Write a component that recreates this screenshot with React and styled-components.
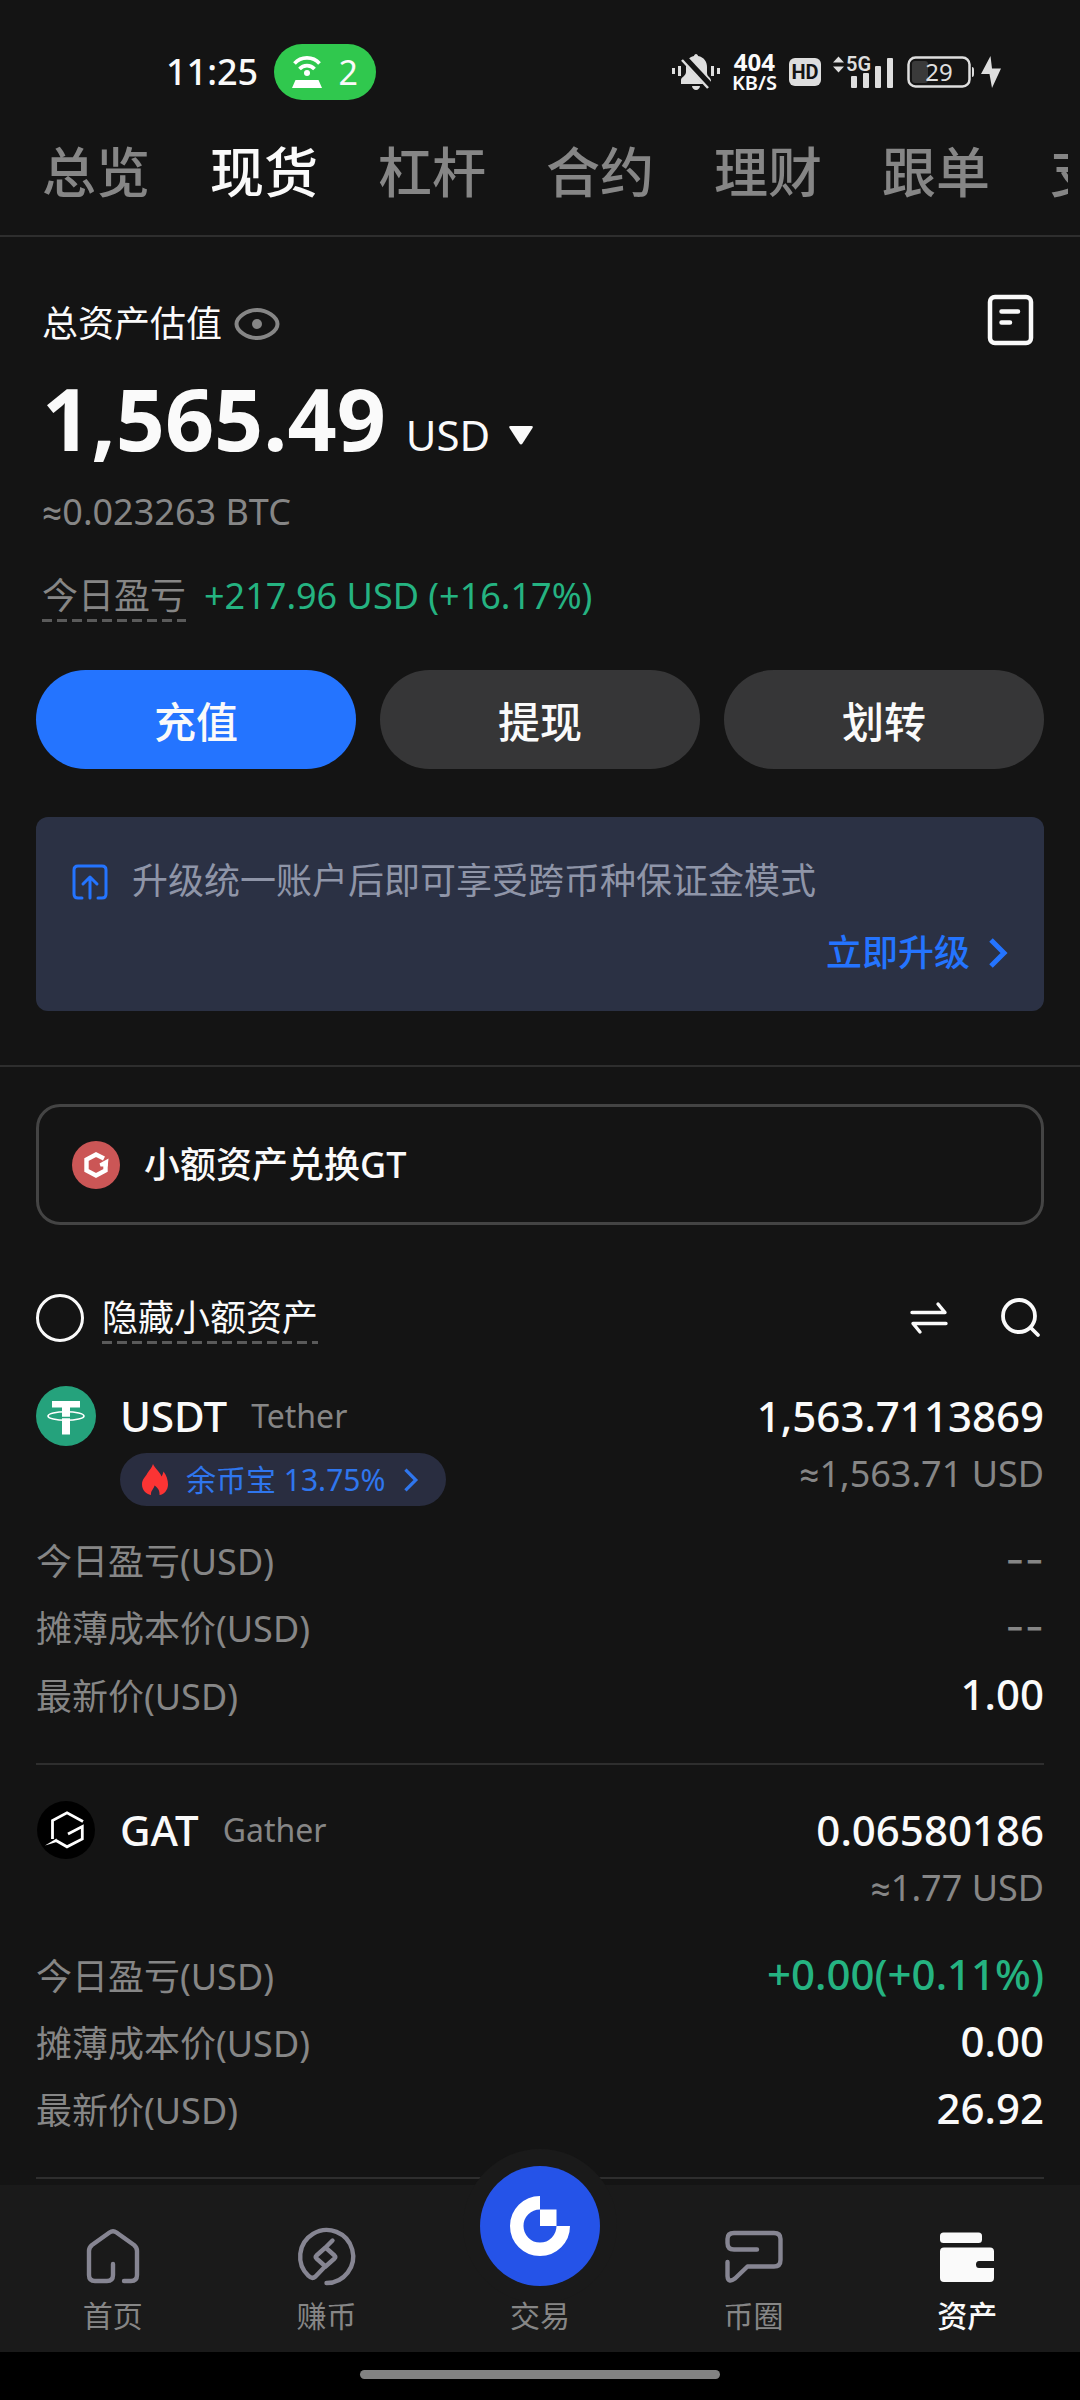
import React from "react";
import styled, { createGlobalStyle } from "styled-components";

const color = {
  page: "#141414",
  nav: "#1a1a1a",
  line: "#2e2e2e",
  text: "#fafafa",
  muted: "#868686",
  navIcon: "#868592",
  blue: "#2474ff",
  green: "#25b381",
};

const GlobalStyle = createGlobalStyle`
  *, *::before, *::after { box-sizing: border-box; }
  body {
    margin: 0;
    background: ${color.page};
    color: ${color.text};
    font-family: "Noto Sans", "Roboto", "Noto Sans CJK SC", sans-serif;
    font-size: 36px;
    line-height: 48px;
  }
  button, select, input { font: inherit; color: inherit; margin: 0; }
  button { border: 0; padding: 0; background: none; cursor: pointer; }
  a { color: inherit; text-decoration: none; }
  svg { display: block; flex: none; overflow: visible; }
  h1, h2, p, dl, dd, ul { margin: 0; padding: 0; font-weight: inherit; font-size: inherit; }
`;

const Screen = styled.div`
  display: flex;
  flex-direction: column;
  min-height: 100vh;
`;

/* ---------- status bar ---------- */

const StatusBar = styled.header`
  display: flex;
  justify-content: space-between;
  align-items: center;
  height: 56px;
  margin-top: 44px;
  padding: 0 79px 0 166px;
`;

const StatusGroup = styled.div`
  display: flex;
  align-items: center;
  gap: ${(p) => p.$gap}px;
`;

const Clock = styled.time`
  font-weight: 500;
`;

const Hotspot = styled.div`
  display: flex;
  align-items: center;
  justify-content: center;
  gap: 16px;
  width: 102px;
  height: 56px;
  border-radius: 28px;
  background: #30c84e;
  font-size: 34px;
`;

const NetSpeed = styled.div`
  display: flex;
  flex-direction: column;
  align-items: center;
  font-size: 24px;
  line-height: 22px;
  font-weight: 700;
`;

const NetUnit = styled.span`
  font-size: 20px;
  line-height: 20px;
  font-weight: 600;
`;

const HdBadge = styled.span`
  width: 32px;
  height: 28px;
  border-radius: 6px;
  background: #dedede;
  color: ${color.page};
  font: 700 20px/28px "Roboto", sans-serif;
  text-align: center;
`;

/* ---------- account tabs ---------- */

const Tabs = styled.nav`
  border-bottom: 2px solid ${color.line};
  padding: 36px 12px 27px 42px;
`;

const TabList = styled.div`
  display: flex;
  gap: 60px;
  overflow: hidden;
`;

const Tab = styled.a`
  flex: none;
  font-size: 54px;
  line-height: 72px;
  font-weight: 500;
  color: ${(p) => (p.$active ? color.text : color.muted)};
`;

/* ---------- balance summary ---------- */

const Summary = styled.section`
  padding: 57px 36px 54px;
  border-bottom: 2px solid ${color.line};
`;

const SummaryText = styled.div`
  display: flex;
  flex-direction: column;
  padding: 0 8px 0 6px;
`;

const TitleRow = styled.div`
  display: flex;
  align-items: center;
  justify-content: space-between;
  height: 52px;
`;

const Title = styled.div`
  display: flex;
  align-items: center;
  gap: 12px;
  padding-top: 8px;
`;

const BalanceRow = styled.div`
  display: flex;
  align-items: baseline;
  gap: 20px;
  margin-top: 22px;
  line-height: 100px;
`;

const Balance = styled.strong`
  font-size: 86px;
  font-weight: 700;
`;

const CurrencyPicker = styled.label`
  display: flex;
  align-items: center;
  gap: 18px;
  line-height: 48px;
`;

const CurrencySelect = styled.select`
  appearance: none;
  border: 0;
  padding: 0;
  background: none;
  font-size: 42px;
`;

const BtcValue = styled.p`
  margin-top: 20px;
  color: ${color.muted};
`;

const ProfitRow = styled.div`
  display: flex;
  align-items: center;
  gap: 18px;
  margin-top: 34px;
`;

const Dashed = styled.span`
  padding: 2px 0;
  color: ${(p) => (p.$muted ? color.muted : color.text)};
  background: repeating-linear-gradient(90deg, #5a5a5a 0 10px, transparent 10px 15px) left bottom / 100% 3px no-repeat;
`;

const Gain = styled.span`
  color: ${color.green};
`;

const Actions = styled.div`
  display: grid;
  grid-template-columns: repeat(3, 1fr);
  gap: 24px;
  margin-top: 48px;
`;

const ActionButton = styled.button`
  height: 99px;
  padding-top: 4px;
  border-radius: 50px;
  background: ${(p) => (p.$primary ? color.blue : "#363637")};
  font-size: 42px;
  font-weight: 500;
`;

const Banner = styled.div`
  display: flex;
  flex-direction: column;
  gap: 24px;
  margin-top: 48px;
  padding: 40px 36px 34px;
  border-radius: 12px;
  background: #2b3144;
`;

const BannerMessage = styled.p`
  display: flex;
  align-items: center;
  gap: 24px;
  color: #8f95a8;
`;

const BannerLink = styled.a`
  display: flex;
  align-items: center;
  align-self: flex-end;
  gap: 18px;
  color: ${color.blue};
  font-weight: 500;
`;

/* ---------- asset list ---------- */

const Assets = styled.section`
  flex: 1;
  padding: 37px 36px 0;
`;

const ConvertButton = styled.button`
  display: flex;
  align-items: center;
  gap: 24px;
  width: 100%;
  height: 121px;
  padding: 0 33px;
  border: 3px solid #444444;
  border-radius: 24px;
  font-weight: 500;
`;

const FilterRow = styled.div`
  display: flex;
  align-items: center;
  justify-content: space-between;
  margin-top: 67px;
  padding-right: 2px;
`;

const HideSmall = styled.label`
  display: flex;
  align-items: center;
  gap: 18px;
`;

const RoundCheckbox = styled.input`
  appearance: none;
  width: 48px;
  height: 48px;
  border: 3px solid ${color.text};
  border-radius: 50%;
  &:checked { background: ${color.blue}; }
`;

const FilterTools = styled.div`
  display: flex;
  gap: 52px;
`;

const AssetList = styled.ul`
  list-style: none;
  margin-top: 7px;
`;

const Asset = styled.li`
  padding: 35px 0 43px;
  border-bottom: 2px solid ${color.line};
`;

const AssetHead = styled.div`
  display: flex;
  gap: 24px;
  min-height: 120px;
`;

const AssetInfo = styled.div`
  flex: 1;
  display: flex;
  flex-direction: column;
  align-items: flex-start;
  gap: 7px;
`;

const AssetName = styled.h2`
  display: flex;
  align-items: center;
  gap: 24px;
  line-height: 60px;
`;

const Symbol = styled.span`
  font-size: 42px;
  font-weight: 500;
`;

const FullName = styled.span`
  color: ${color.muted};
  font-size: 32px;
`;

const EarnTag = styled.a`
  display: flex;
  align-items: center;
  gap: 18px;
  height: 53px;
  padding: 0 27px 0 22px;
  border-radius: 27px;
  background: #292d40;
  color: #2f76ee;
  font-size: 30px;
`;

const AssetAmount = styled.div`
  display: flex;
  flex-direction: column;
  align-items: flex-end;
  gap: 4px;
`;

const Amount = styled.span`
  font-size: 42px;
  line-height: 60px;
  font-weight: 500;
`;

const Approx = styled.span`
  color: ${color.muted};
`;

const Details = styled.dl`
  display: flex;
  flex-direction: column;
  gap: 17px;
  margin-top: 30px;
`;

const Detail = styled.div`
  display: flex;
  align-items: baseline;
  justify-content: space-between;
  height: 50px;
`;

const DetailLabel = styled.dt`
  color: ${color.muted};
`;

const DetailValue = styled.dd`
  font-size: 42px;
  font-weight: 500;
  color: ${(p) => (p.$gain ? color.green : color.text)};
`;

const EmptyValue = styled.dd`
  color: ${color.muted};
  font-family: "Inter", sans-serif;
  font-size: 42px;
`;

/* ---------- bottom navigation ---------- */

const BottomBar = styled.footer`
  position: sticky;
  bottom: 0;
  background: #000;
`;

const NavItems = styled.nav`
  display: flex;
  align-items: flex-end;
  padding: 0 6px 16px;
  height: 167px;
  background: ${color.nav};
`;

const NavItem = styled.a`
  flex: 1;
  display: flex;
  flex-direction: column;
  align-items: center;
  gap: 10px;
  font-size: 30px;
  line-height: 40px;
  color: ${(p) => (p.$active ? color.text : color.muted)};
  font-weight: ${(p) => (p.$active ? 500 : 400)};
`;

const TradeDisc = styled.span`
  display: flex;
  align-items: center;
  justify-content: center;
  width: 120px;
  height: 120px;
  border-radius: 50%;
  background: #2553e8;
  box-shadow: 0 0 0 17px ${color.nav};
`;

const NavLabel = styled.span`
  position: relative;
`;

const GestureArea = styled.div`
  display: flex;
  justify-content: center;
  height: 48px;
  padding-top: 18px;
`;

const GesturePill = styled.div`
  width: 33.3%;
  height: 9px;
  border-radius: 5px;
  background: #828282;
`;

/* ---------- icons ---------- */

const HotspotIcon = () => (
  <svg width="30" height="34" viewBox="0 0 30 34" fill="none" stroke="#fff" strokeWidth="3.6">
    <path d="M2.5 8.5C9 1 21 1 27.500 8.500" />
    <path d="M7.500 14C11.500 9.500 18.500 9.500 22.500 14" />
    <circle cx="15" cy="18" r="3" fill="#fff" stroke="none" />
    <path d="M3.500 25H26.500L30 33H0Z" fill="#fff" stroke="none" />
  </svg>
);

const MutedBell = () => (
  <svg width="48" height="36" viewBox="0 0 48 36" fill="#dedede">
    <path d="M0 14h3v6H0zM6 12h3v10H6zM39 12h3v10h-3zM45 14h3v6h-3z" />
    <path d="M24 0C25 0 26 1 26 2C32 3 35 8 35 13V19C35 23 39 23 39 27V30H9V26C9 23 14 22 14 18V12C14 7 17 3 22 2C22 1 23 0 24 0Z" />
    <path d="M20 32H28C28 34 26 36 24 36S20 34 20 32Z" />
    <path d="M12 4L39 33" stroke={color.page} strokeWidth="7" />
    <path d="M10 6L36 34" stroke="#dedede" strokeWidth="2.500" />
  </svg>
);

const Signal = () => (
  <svg width="62" height="36" viewBox="0 0 62 36" fill="#dedede">
    <path d="M0 8.500L5.500 2.500L11 8.500ZM0 12.500H11L5.500 18.500Z" />
    <rect x="18" y="22" width="6" height="12" rx="1" />
    <rect x="30" y="19" width="6" height="15" rx="1" />
    <rect x="42" y="12" width="6" height="22" rx="1" />
    <rect x="54" y="4" width="6" height="30" rx="1" />
    <text x="13" y="17" fontFamily="Roboto, sans-serif" fontSize="20" fontWeight="600">5G</text>
  </svg>
);

const Battery = () => (
  <svg width="68" height="34" viewBox="0 0 68 34">
    <rect x="5" y="6" width="16" height="22" rx="3" fill="#3a3a3a" />
    <rect x="1.500" y="2.500" width="61" height="29" rx="7" fill="none" stroke="#dedede" strokeWidth="2.500" />
    <path d="M65 12q2 0 2 3v4q0 3-2 3z" fill="#dedede" />
    <text x="32" y="26" textAnchor="middle" fontFamily="Noto Sans, sans-serif" fontSize="24" fill="#dedede">29</text>
  </svg>
);

const Bolt = () => (
  <svg width="20" height="34" viewBox="0 0 20 34" fill="#dedede">
    <path d="M9.500 1L0 19H8.500L11 33L20 13.500H11Z" />
  </svg>
);

const EyeIcon = () => (
  <svg width="46" height="34" viewBox="0 0 46 34" fill="none" stroke={color.muted} strokeWidth="4">
    <path d="M2.500 17C2.500 10 13 3 23 3S43.500 10 43.500 17S33 31 23 31S2.500 24 2.500 17Z" />
    <circle cx="23" cy="17" r="5" fill={color.muted} stroke="none" />
  </svg>
);

const HistoryIcon = () => (
  <svg width="50" height="52" viewBox="0 0 50 52" fill="none" stroke={color.text} strokeWidth="4.500" strokeLinecap="round">
    <rect x="4" y="3" width="41" height="46" rx="5" />
    <path d="M15.500 17.500H32M15.500 28.500H24" />
  </svg>
);

const CaretIcon = () => (
  <svg width="24" height="20" viewBox="0 0 24 20" fill={color.text}>
    <path d="M1.500 1H22.500Q24.500 1 23.500 3L13.500 18.500Q12 20.500 10.500 18.500L.5 3Q-.5 1 1.500 1Z" />
  </svg>
);

const UpgradeIcon = () => (
  <svg width="36" height="34" viewBox="0 0 36 34" fill="none" stroke={color.blue} strokeWidth="3" strokeLinecap="round" strokeLinejoin="round">
    <path d="M10 34H6Q2 34 2 30V6Q2 2 6 2H30Q34 2 34 6V30Q34 34 30 34H26" />
    <path d="M18 34V13M11 20L18 13L25 20" />
  </svg>
);

const Chevron = ({ width, height, stroke }) => (
  <svg width={width} height={height} viewBox="0 0 20 32" fill="none" stroke="currentColor" strokeWidth={stroke}>
    <path d="M3 3L16 16L3 29" />
  </svg>
);

const GtLogo = () => (
  <svg width="48" height="48" viewBox="0 0 48 48">
    <circle cx="24" cy="24" r="24" fill="#cb5656" />
    <path d="M32 17.500L24 13.500L14.500 18.500V29.500L24 34.500L33.500 29.500V23" fill="none" stroke="#fff" strokeWidth="4.400" />
    <path d="M36.500 17.500L27.500 22.500L28.500 25.500L35.700 25.500Z" fill="#fff" />
  </svg>
);

const SwapIcon = () => (
  <svg width="38" height="38" viewBox="0 0 38 38" fill="none" stroke={color.text} strokeWidth="3.400" strokeLinecap="round" strokeLinejoin="round">
    <path d="M2 13.500H35L28 5M36 24.500H3L10 33" />
  </svg>
);

const SearchIcon = () => (
  <svg width="42" height="42" viewBox="0 0 42 42" fill="none" stroke={color.text} strokeWidth="3.800" strokeLinecap="round">
    <circle cx="19" cy="19" r="16" />
    <path d="M30.500 30.500L38 38" />
  </svg>
);

const TetherLogo = () => (
  <svg width="60" height="60" viewBox="0 0 60 60">
    <circle cx="30" cy="30" r="30" fill="#25a27c" />
    <path d="M16 15H44V21.500H34V48.500H26V21.500H16Z" fill="#fff" />
    <path d="M26 31.500H34" stroke="#25a27c" strokeWidth="1.500" />
    <ellipse cx="30" cy="30" rx="18" ry="4.300" fill="none" stroke="#fff" strokeWidth="1.600" />
  </svg>
);

const GatherLogo = () => (
  <svg width="60" height="60" viewBox="0 0 60 60">
    <circle cx="30" cy="30" r="29" fill="#000" />
    <g fill="none" stroke="#fff" strokeWidth="2.800">
      <path d="M47 21.500L31 12.800L16.500 20.500V39" />
      <path d="M20 40.500L31 46.800L46.300 39V26.500L32 34" />
    </g>
    <path d="M9 45.500L20.500 38.500L21.500 41.800Z" fill="#fff" />
  </svg>
);

const Flame = () => (
  <svg width="26" height="32" viewBox="0 0 26 32" fill="#fb3434">
    <path d="M11 0C13 4.500 18 8 19.500 12.500C20.700 11 21 9 21.500 7.500C24.500 11.500 26 16 26 20.500C26 26 22 30.500 17.500 31C18 26.500 15.500 23.500 12.500 21.500C12 25 8.500 26.500 9 31C4 30 0 26 0 20.500C0 15 3.500 13 5.500 9C7.500 6 10 3.500 11 0Z" />
  </svg>
);

const navStroke = {
  width: 60,
  height: 60,
  viewBox: "0 0 60 60",
  fill: "none",
  stroke: color.navIcon,
  strokeWidth: 4.4,
  strokeLinecap: "round",
  strokeLinejoin: "round",
};

const HomeIcon = () => (
  <svg {...navStroke}>
    <path d="M41 55H48Q54 55 54 49V25Q54 21.500 51 19L33.500 6.500Q30 4 26.500 6.500L9 19Q6 21.500 6 25V49Q6 55 12 55H24Q30 55 30 49V38" />
  </svg>
);

const EarnIcon = () => (
  <svg {...navStroke}>
    <path d="M30.500 57A26.500 26.500 0 1 0 12.500 49.800Q16 53.500 19.500 50.500L29.500 40" />
    <path d="M36.500 14.500L29.500 21.500M29.500 21.500L38.500 29.500Q40 31 38.500 32.500L29.500 40.500L20.500 32.500Q19 31 20.500 29.500Z" />
  </svg>
);

const ChatIcon = () => (
  <svg {...navStroke}>
    <path d="M33 23.500H10Q3.500 23.500 3.500 17V13Q3.500 7 10 7H50Q56.500 7 56.500 13V34Q56.500 40.500 50 40.500H23.500L11 52.500Q4 57.500 3.500 50V36" />
  </svg>
);

const WalletIcon = () => (
  <svg width="60" height="60" viewBox="0 0 60 60" fill={color.text}>
    <rect x="3" y="6.500" width="42" height="10.500" rx="3.500" />
    <path d="M7 21.500H53Q57 21.500 57 25.500V35H42Q39 35 39 38.500T42 42H57V52Q57 56 53 56H7Q3 56 3 52V25.500Q3 21.500 7 21.500Z" />
  </svg>
);

const TradeIcon = () => (
  <svg width="60" height="60" viewBox="0 0 60 60">
    <path d="M30 6.750A23.250 23.250 0 1 0 53.250 30" fill="none" stroke="#fff" strokeWidth="13.500" />
    <rect x="30" y="13.500" width="16.500" height="16.500" fill="#fff" />
  </svg>
);

/* ---------- data ---------- */

const tabs = ["总览", "现货", "杠杆", "合约", "理财", "跟单", "支付"];

const assets = [
  {
    symbol: "USDT",
    name: "Tether",
    Logo: TetherLogo,
    earn: "余币宝 13.75%",
    amount: "1,563.7113869",
    approx: "≈1,563.71 USD",
    profit: null,
    cost: null,
    price: "1.00",
  },
  {
    symbol: "GAT",
    name: "Gather",
    Logo: GatherLogo,
    amount: "0.06580186",
    approx: "≈1.77 USD",
    profit: "+0.00(+0.11%)",
    cost: "0.00",
    price: "26.92",
  },
];

const navItems = [
  { label: "首页", Icon: HomeIcon },
  { label: "赚币", Icon: EarnIcon },
  { label: "交易", Icon: TradeIcon, trade: true },
  { label: "币圈", Icon: ChatIcon },
  { label: "资产", Icon: WalletIcon, active: true },
];

const DetailRow = ({ label, value, gain }) => (
  <Detail>
    <DetailLabel>{label}</DetailLabel>
    {value ? <DetailValue $gain={gain}>{value}</DetailValue> : <EmptyValue>--</EmptyValue>}
  </Detail>
);

const AssetItem = ({ symbol, name, Logo, earn, amount, approx, profit, cost, price }) => (
  <Asset>
    <AssetHead>
      <Logo />
      <AssetInfo>
        <AssetName>
          <Symbol>{symbol}</Symbol>
          <FullName>{name}</FullName>
        </AssetName>
        {earn && (
          <EarnTag href="#earn">
            <Flame />
            {earn}
            <Chevron width={16} height={26} stroke={4} />
          </EarnTag>
        )}
      </AssetInfo>
      <AssetAmount>
        <Amount>{amount}</Amount>
        <Approx>{approx}</Approx>
      </AssetAmount>
    </AssetHead>
    <Details>
      <DetailRow label="今日盈亏(USD)" value={profit} gain />
      <DetailRow label="摊薄成本价(USD)" value={cost} />
      <DetailRow label="最新价(USD)" value={price} />
    </Details>
  </Asset>
);

export default function App() {
  return (
    <Screen>
      <GlobalStyle />
      <StatusBar>
        <StatusGroup $gap={16}>
          <Clock>11:25</Clock>
          <Hotspot>
            <HotspotIcon />2
          </Hotspot>
        </StatusGroup>
        <StatusGroup $gap={12}>
          <MutedBell />
          <NetSpeed>
            404
            <NetUnit>KB/S</NetUnit>
          </NetSpeed>
          <HdBadge>HD</HdBadge>
          <Signal />
          <StatusGroup $gap={6}>
            <Battery />
            <Bolt />
          </StatusGroup>
        </StatusGroup>
      </StatusBar>

      <Tabs>
        <TabList>
          {tabs.map((t) => (
            <Tab key={t} href="#account" $active={t === "现货"}>
              {t}
            </Tab>
          ))}
        </TabList>
      </Tabs>

      <Summary>
        <SummaryText>
          <TitleRow>
            <Title>
              总资产估值
              <button type="button" aria-label="隐藏金额">
                <EyeIcon />
              </button>
            </Title>
            <button type="button" aria-label="资金记录">
              <HistoryIcon />
            </button>
          </TitleRow>
          <BalanceRow>
            <Balance>1,565.49</Balance>
            <CurrencyPicker>
              <CurrencySelect aria-label="计价货币" defaultValue="USD">
                <option>USD</option>
              </CurrencySelect>
              <CaretIcon />
            </CurrencyPicker>
          </BalanceRow>
          <BtcValue>≈0.023263 BTC</BtcValue>
          <ProfitRow>
            <Dashed $muted>今日盈亏</Dashed>
            <Gain>+217.96 USD (+16.17%)</Gain>
          </ProfitRow>
        </SummaryText>

        <Actions>
          <ActionButton type="button" $primary>充值</ActionButton>
          <ActionButton type="button">提现</ActionButton>
          <ActionButton type="button">划转</ActionButton>
        </Actions>

        <Banner>
          <BannerMessage>
            <UpgradeIcon />
            升级统一账户后即可享受跨币种保证金模式
          </BannerMessage>
          <BannerLink href="#upgrade">
            立即升级
            <Chevron width={20} height={32} stroke={5} />
          </BannerLink>
        </Banner>
      </Summary>

      <Assets>
        <ConvertButton type="button">
          <GtLogo />
          小额资产兑换GT
        </ConvertButton>
        <FilterRow>
          <HideSmall>
            <RoundCheckbox type="checkbox" />
            <Dashed>隐藏小额资产</Dashed>
          </HideSmall>
          <FilterTools>
            <button type="button" aria-label="切换">
              <SwapIcon />
            </button>
            <button type="button" aria-label="搜索">
              <SearchIcon />
            </button>
          </FilterTools>
        </FilterRow>
        <AssetList>
          {assets.map((a) => (
            <AssetItem key={a.symbol} {...a} />
          ))}
        </AssetList>
      </Assets>

      <BottomBar>
        <NavItems>
          {navItems.map(({ label, Icon, trade, active }) => (
            <NavItem key={label} href="#nav" $active={active}>
              {trade ? (
                <TradeDisc>
                  <Icon />
                </TradeDisc>
              ) : (
                <Icon />
              )}
              <NavLabel>{label}</NavLabel>
            </NavItem>
          ))}
        </NavItems>
        <GestureArea>
          <GesturePill />
        </GestureArea>
      </BottomBar>
    </Screen>
  );
}
